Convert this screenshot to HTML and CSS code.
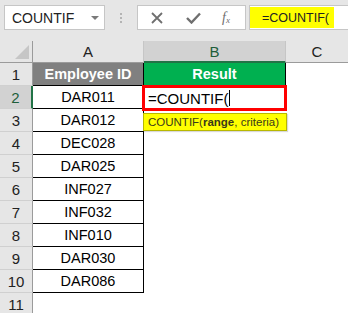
FILE: index.html
```html
<!DOCTYPE html>
<html lang="en">
<head>
    <meta charset="UTF-8">
    <title>COUNTIF</title>
    <link rel="stylesheet" href="styles.css">
</head>
<body>
    <div class="toolbar">
        <div class="namebox">
            <span>COUNTIF</span>
            <span class="caret"></span>
        </div>
        <div class="grip">
            <i></i><i></i><i></i>
        </div>
        <div class="fx-buttons">
            <svg class="ico" width="12" height="12" viewBox="0 0 12 12">
                <path d="M1 1 L11 11 M11 1 L1 11" stroke="#6f6f6f" stroke-width="1.8" fill="none"/>
            </svg>
            <svg class="ico" width="15" height="12" viewBox="0 0 15 12">
                <path d="M1 6 L5.5 10.5 L14 1.5" stroke="#6f6f6f" stroke-width="2.4" fill="none"/>
            </svg>
            <span class="fx">f<sub>x</sub></span>
        </div>
        <div class="formula">
            <span class="mark">=COUNTIF(</span>
        </div>
    </div>

    <div class="sheet">
        <div class="corner"><span></span></div>
        <div class="colhead">A</div>
        <div class="colhead sel">B</div>
        <div class="colhead last">C</div>

        <div class="rowhead">1</div>
        <div class="cell a head">Employee ID</div>
        <div class="cell b head">Result</div>
        <div class="cell c"></div>

        <div class="rowhead sel">2</div>
        <div class="cell a">DAR011</div>
        <div class="cell b edit">=COUNTIF(<span class="cursor"></span></div>
        <div class="cell c"></div>

        <div class="rowhead">3</div>
        <div class="cell a">DAR012</div>
        <div class="cell"></div>
        <div class="cell c"></div>

        <div class="rowhead">4</div>
        <div class="cell a">DEC028</div>
        <div class="cell"></div>
        <div class="cell c"></div>

        <div class="rowhead">5</div>
        <div class="cell a">DAR025</div>
        <div class="cell"></div>
        <div class="cell c"></div>

        <div class="rowhead">6</div>
        <div class="cell a">INF027</div>
        <div class="cell"></div>
        <div class="cell c"></div>

        <div class="rowhead">7</div>
        <div class="cell a">INF032</div>
        <div class="cell"></div>
        <div class="cell c"></div>

        <div class="rowhead">8</div>
        <div class="cell a">INF010</div>
        <div class="cell"></div>
        <div class="cell c"></div>

        <div class="rowhead">9</div>
        <div class="cell a">DAR030</div>
        <div class="cell"></div>
        <div class="cell c"></div>

        <div class="rowhead">10</div>
        <div class="cell a">DAR086</div>
        <div class="cell"></div>
        <div class="cell c"></div>

        <div class="rowhead">11</div>
        <div class="cell"></div>
        <div class="cell"></div>
        <div class="cell c"></div>

        <!-- selection box and function hint sit over the grid -->
        <div class="selbox"></div>
        <div class="hint">COUNTIF(<b>range</b>, criteria)</div>
    </div>
</body>
</html>
```

FILE: styles.css
```css
 * {
     box-sizing: border-box;
 }
 body {
     margin: 0;
     width: 348px;
     height: 313px;
     overflow: hidden;
     background-color: white;
     font-family: "Liberation Sans", Arial, sans-serif;
     color: black;
 }
 .toolbar {
     height: 41px;
     background-color: #e6e6e6;
     display: flex;
     align-items: flex-start;
     padding-top: 5px;
 }
 .namebox {
     margin-left: 4px;
     width: 101px;
     height: 25px;
     background-color: white;
     border: 1px solid #c6c6c6;
     display: flex;
     align-items: center;
     justify-content: space-between;
     padding: 0 5px 0 7px;
     font-size: 14px;
     color: #222;
 }
 .caret {
     width: 0;
     height: 0;
     border-left: 4px solid transparent;
     border-right: 4px solid transparent;
     border-top: 4px solid #7a7a7a;
 }
 .grip {
     width: 32px;
     height: 25px;
     display: flex;
     flex-direction: column;
     align-items: center;
     justify-content: center;
     gap: 2px;
 }
 .grip i {
     width: 2px;
     height: 2px;
     background-color: #b4b4b4;
 }
 .fx-buttons {
     width: 109px;
     height: 25px;
     background-color: white;
     border: 1px solid #c6c6c6;
     display: flex;
     align-items: center;
     padding-left: 13px;
     gap: 23px;
 }
 .fx {
     font-family: "Liberation Serif", serif;
     font-style: italic;
     font-size: 14px;
     color: #6f6f6f;
     margin-left: -2px;
 }
 .fx sub {
     font-size: 9px;
     vertical-align: -1px;
 }
 .formula {
     margin-left: 3px;
     flex: 1;
     height: 25px;
     background-color: white;
     border: 1px solid #c6c6c6;
     border-right: none;
     padding: 1px 0;
 }
 .mark {
     display: flex;
     align-items: center;
     width: 84px;
     height: 21px;
     background-color: #ffff00;
     padding-left: 12px;
     font-size: 12.5px;
     color: #222;
 }
 .sheet {
     position: relative;
     display: grid;
     grid-template-columns: 33px 111px 142px 1fr;
     grid-template-rows: 22px;
     grid-auto-rows: 23px;
 }
 .corner {
     background-color: #e6e6e6;
     border-right: 1px solid #9b9b9b;
     border-bottom: 1px solid #9b9b9b;
     position: relative;
 }
 .corner span {
     position: absolute;
     right: 3px;
     bottom: 3px;
     width: 0;
     height: 0;
     border-left: 14px solid transparent;
     border-bottom: 14px solid #c6c6c6;
 }
 .colhead {
     background-color: #e6e6e6;
     border-right: 1px solid #c6c6c6;
     border-bottom: 1px solid #9b9b9b;
     display: flex;
     align-items: center;
     justify-content: center;
     font-size: 15px;
     color: #222;
 }
 .colhead.sel {
     background-color: #d2d2d2;
     border-bottom: 2px solid #217346;
     color: #1e5e3a;
 }
 .colhead.last {
     border-right: none;
 }
 .rowhead {
     background-color: #e6e6e6;
     border-right: 1px solid #9b9b9b;
     border-bottom: 1px solid #d0d0d0;
     display: flex;
     align-items: center;
     justify-content: center;
     font-size: 15px;
     color: #222;
 }
 .rowhead.sel {
     background-color: #d2d2d2;
     border-right: 2px solid #217346;
     color: #1e5e3a;
 }
 .cell {
     display: flex;
     align-items: center;
     font-size: 14.5px;
 }
 .cell.a {
     justify-content: center;
     border-right: 1px solid black;
     border-bottom: 1px solid black;
 }
 .cell.head {
     color: white;
     font-weight: bold;
     font-size: 14.5px;
 }
 .cell.a.head {
     background-color: #808080;
 }
 .cell.b.head {
     background-color: #00b050;
     justify-content: center;
     border-right: 1px solid black;
     border-bottom: 1px solid black;
 }
 .cell.edit {
     padding-left: 4px;
     font-size: 15px;
     padding-top: 1px;
 }
 .cursor {
     width: 1px;
     height: 16px;
     background-color: black;
     margin-left: 1px;
 }
 .selbox {
     position: absolute;
     left: 142px;
     top: 44px;
     width: 145px;
     height: 26px;
     border: 3px solid #ff0000;
 }
 .hint {
     position: absolute;
     left: 143px;
     top: 72px;
     width: 144px;
     height: 18px;
     background-color: #ffff00;
     border: 1px solid #b8b800;
     box-shadow: 1px 1px 1px rgba(0, 0, 0, 0.15);
     font-size: 11.5px;
     color: #3a3a1a;
     padding-left: 4px;
     line-height: 16px;
     white-space: nowrap;
 }
```
